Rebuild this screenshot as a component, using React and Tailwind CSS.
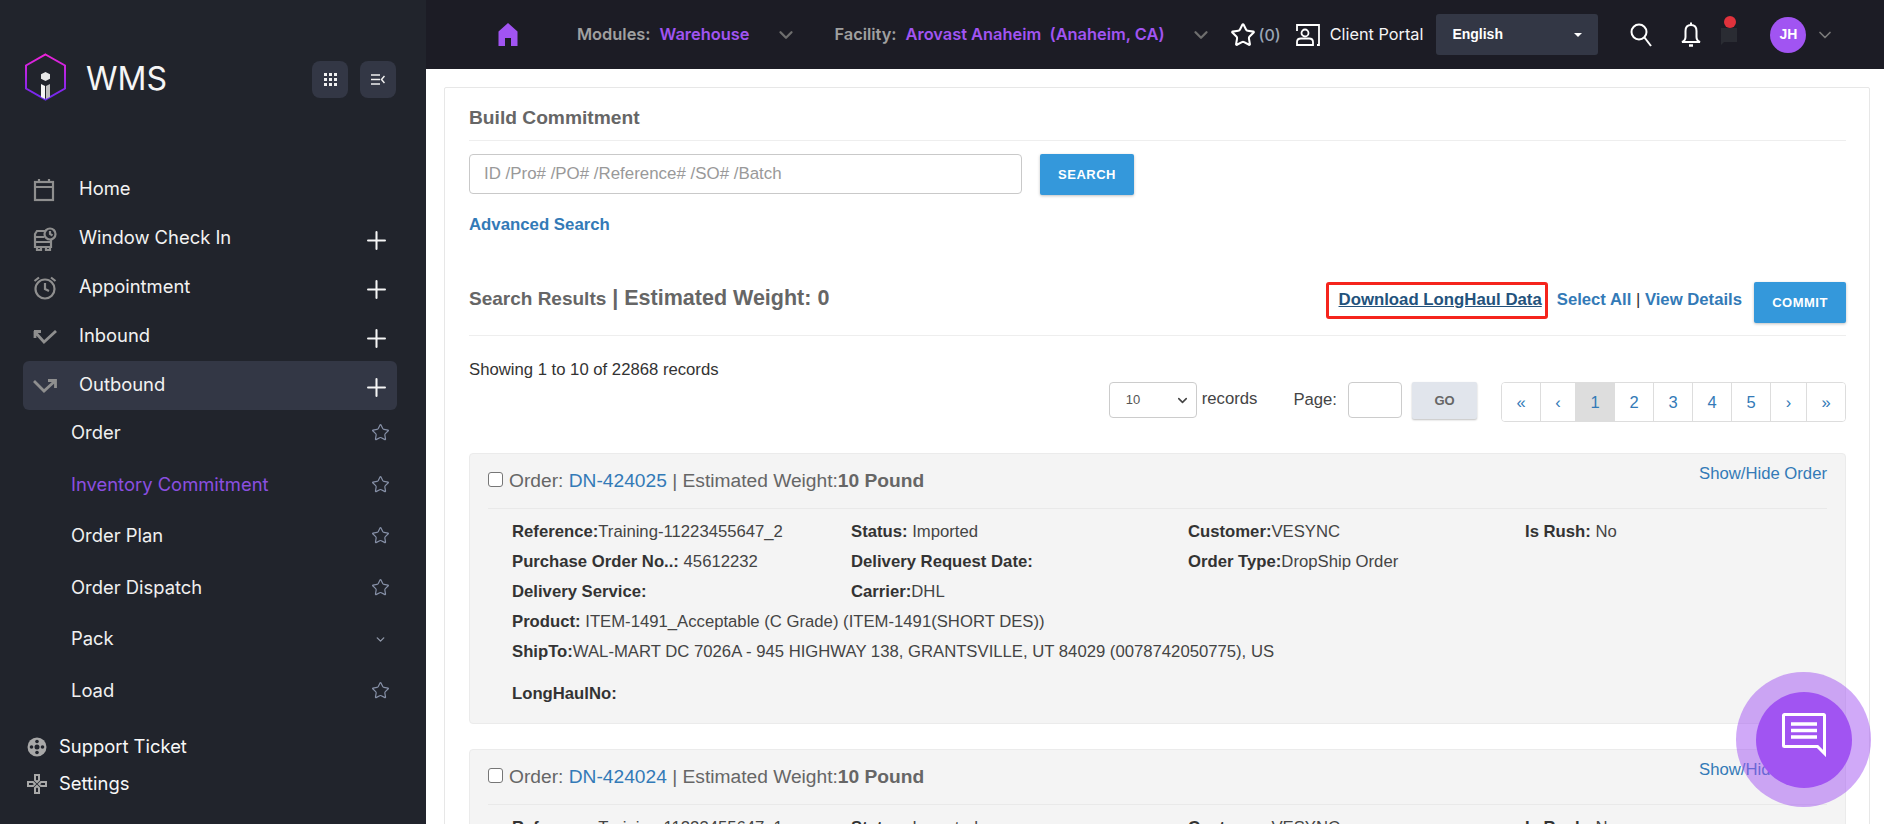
import React from "react";
import { Star, Plus, ChevronDown } from "lucide-react";

const arial = "font-['Liberation_Sans',Arial,sans-serif]";

const menu = [
  { label: "Home", icon: "home" },
  { label: "Window Check In", icon: "truck", plus: true },
  { label: "Appointment", icon: "alarm", plus: true },
  { label: "Inbound", icon: "in", plus: true },
  { label: "Outbound", icon: "out", plus: true, active: true },
];

const subMenu = [
  { label: "Order" },
  { label: "Inventory Commitment", active: true },
  { label: "Order Plan" },
  { label: "Order Dispatch" },
  { label: "Pack", chevron: true },
  { label: "Load" },
];

const pages = ["«", "‹", "1", "2", "3", "4", "5", "›", "»"];
const pageWidths = ["w-[39px]", "w-[35px]", "w-[39px]", "w-[39px]", "w-[39px]", "w-[39px]", "w-[39px]", "w-[36px]", "w-[38px]"];

function MenuIcon({ name }) {
  const c = { fill: "none", stroke: "#8f8f8f", strokeWidth: 2.2 };
  if (name === "home")
    return (
      <svg width="22" height="24" viewBox="0 0 22 24" {...c}>
        <rect x="2" y="4" width="18" height="18" />
        <path d="M2 9h18M6 1v4M16 1v4" />
      </svg>
    );
  if (name === "truck")
    return (
      <svg width="24" height="24" viewBox="0 0 24 24" {...c}>
        <path d="M12 4H4L2 7v13h16v-7M2 10h9M2 15h16M4 20v3h4v-3M13 20v3h4v-3" />
        <circle cx="17" cy="7" r="5.5" />
        <path d="M17 4v3l2.5 1.5" />
      </svg>
    );
  if (name === "alarm")
    return (
      <svg width="24" height="24" viewBox="0 0 24 24" {...c}>
        <circle cx="12" cy="13" r="9.5" />
        <path d="M12 7v6l4 2M1.5 5 6 1.5M22.5 5 18 1.5" />
      </svg>
    );
  if (name === "in")
    return (
      <svg width="24" height="14" viewBox="0 0 24 14" {...c} strokeWidth="2.8">
        <path d="M1 1.500h7M2 1v7M2 2l9 10L23 1" />
      </svg>
    );
  return (
    <svg width="24" height="14" viewBox="0 0 24 14" {...c} strokeWidth="2.8">
      <path d="M1 2l10 10L22 2M15 1.500h7.500V9" />
    </svg>
  );
}

function Logo() {
  return (
    <svg width="44" height="49" viewBox="0 0 44 49">
      <defs>
        <linearGradient id="hex" x1="0" y1="0" x2="0" y2="1">
          <stop offset="0" stopColor="#ee22d8" />
          <stop offset="1" stopColor="#6a28f0" />
        </linearGradient>
      </defs>
      <path d="M21.500 1.500 41 12.500v23L21.500 46.500 2 35.500v-23z" fill="none" stroke="url(#hex)" strokeWidth="2" />
      <path d="M21.500 19l4.500 2.200v4.600L21.500 28 17 25.800v-4.600z" fill="#e8e8e8" />
      <path d="M17 31l4 2v13l-4-2z" fill="#f5f5f5" />
      <path d="M26 31l-4 2v13l4-2z" fill="#bdbdbd" />
    </svg>
  );
}

function SideBar() {
  return (
    <aside className="w-[426px] h-full shrink-0 bg-[#21242c] text-white font-['Inter',sans-serif]">
      <div className="h-[165px] pt-[53px] pl-[24px] pr-[30px] flex items-start">
        <Logo />
        <span className="ml-[18px] mt-[3px] text-[32px] leading-[46px] text-[#f5f5f5]">WMS</span>
        <div className="ml-auto mt-[8px] flex gap-[12px]">
          <button className="w-[36px] h-[37px] rounded-[8px] bg-[#333745] flex items-center justify-center">
            <svg width="13" height="13" viewBox="0 0 13 13" fill="#f0f0f0">
              <path d="M0 0h3v3H0zM5 0h3v3H5zM10 0h3v3h-3zM0 5h3v3H0zM5 5h3v3H5zM10 5h3v3h-3zM0 10h3v3H0zM5 10h3v3H5zM10 10h3v3h-3z" />
            </svg>
          </button>
          <button className="w-[36px] h-[37px] rounded-[8px] bg-[#333745] flex items-center justify-center">
            <svg width="14" height="11" viewBox="0 0 14 11" fill="none" stroke="#f0f0f0" strokeWidth="1.500">
              <path d="M0 1h9M0 5.500h9M0 10h9M13.500 2 10.500 5.500l3 3.500" />
            </svg>
          </button>
        </div>
      </div>
      <nav className="pl-[23px] pr-[29px]">
        {menu.map((m) => (
          <div
            key={m.label}
            className={
              "h-[49px] flex items-center pl-[10px] pr-[6px] rounded-[6px] " + (m.active ? "bg-[#333745]" : "")
            }
          >
            <span className="w-[46px] flex justify-start"><MenuIcon name={m.icon} /></span>
            <span className="mb-[2px] text-[18.400px] text-[#f2f2f2]">{m.label}</span>
            {m.plus && <Plus size={29} strokeWidth={1.700} className="ml-auto mt-[4px]" color="#f5f5f5" />}
          </div>
        ))}
      </nav>
      <div className="mt-[-3px] pl-[71px] pr-[36px]">
        {subMenu.map((s) => (
          <div key={s.label} className="h-[51.600px] flex items-center justify-between">
            <span className={"text-[18.400px] " + (s.active ? "text-[#8b4fe0]" : "text-[#f0f0f0]")}>{s.label}</span>
            {s.chevron ? (
              <ChevronDown size={13} strokeWidth={2.500} color="#8f97a8" className="mr-[3px]" />
            ) : (
              <Star size={19} strokeWidth={1.500} color="#8791a8" />
            )}
          </div>
        ))}
      </div>
      <div className="mt-[12px] pl-[27px]">
        <div className="h-[37px] flex items-center gap-[12px]">
          <svg width="20" height="20" viewBox="0 0 20 20">
            <circle cx="10" cy="10" r="9.500" fill="#a8a8a8" />
            <circle cx="10" cy="10" r="2.500" fill="#21242c" />
            <circle cx="10" cy="4.500" r="1.800" fill="#21242c" />
            <circle cx="10" cy="15.500" r="1.800" fill="#21242c" />
            <circle cx="4.500" cy="10" r="1.800" fill="#21242c" />
            <circle cx="15.500" cy="10" r="1.800" fill="#21242c" />
          </svg>
          <span className="text-[18.400px] text-[#f8f8f8]">Support Ticket</span>
        </div>
        <div className="h-[37px] flex items-center gap-[12px]">
          <svg width="20" height="20" viewBox="0 0 20 20" fill="none" stroke="#a8a8a8" strokeWidth="2">
            <path d="M8 1h4v5l-2 2-2-2zM8 19h4v-5l-2-2-2 2zM1 8v4h5l2-2-2-2zM19 8v4h-5l-2-2 2-2z" />
          </svg>
          <span className="text-[18.400px] text-[#f8f8f8]">Settings</span>
        </div>
      </div>
    </aside>
  );
}

function TopBar() {
  return (
    <header className="h-[69px] shrink-0 bg-[#1c1c25] flex items-center pl-[72px] font-['Inter',sans-serif] text-[16.400px]">
      <svg width="20" height="23" viewBox="0 0 20 23" fill="#a154f2">
        <path d="M10 0l9.500 8.500V23H13v-8H7v8H.5V8.500z" />
      </svg>
      <span className="ml-[59px] font-semibold text-[#a0a0a0]">Modules:</span>
      <span className="ml-[9px] font-semibold text-[#a154f2]">Warehouse</span>
      <ChevronDown size={22} strokeWidth={2.500} color="#6e6e6e" className="ml-[26px]" />
      <span className="ml-[37px] font-semibold text-[#a0a0a0]">Facility:</span>
      <span className="ml-[9px] font-semibold text-[#a154f2] whitespace-pre">Arovast Anaheim  (Anaheim, CA)</span>
      <ChevronDown size={22} strokeWidth={2.500} color="#6e6e6e" className="ml-[25px]" />
      <Star size={26} strokeWidth={1.900} color="#fff" className="ml-[18px]" />
      <span className="ml-[3px] text-[#9aa5b5] text-[16px] font-medium">(0)</span>
      <svg width="25" height="22" viewBox="0 0 25 22" fill="none" stroke="#fff" strokeWidth="1.800" className="ml-[14px]">
        <path d="M2 7V1h22v20h-2" />
        <circle cx="10" cy="9" r="3.500" />
        <path d="M2 21v-3c0-2.500 2-3.500 4-3.500h8c2 0 4 1 4 3.500v3z" />
      </svg>
      <span className="ml-[10px] text-[#f5f5f5] text-[16.300px]">Client Portal</span>
      <div className="ml-[13px] w-[162px] h-[41px] rounded-[3px] bg-[#333745] flex items-center pl-[16px] pr-[16px] justify-between">
        <span className={arial + " font-bold text-[14px] text-white"}>English</span>
        <span className="w-0 h-0 border-x-[4px] border-x-transparent border-t-[4px] border-t-white" />
      </div>
      <svg width="24" height="24" viewBox="0 0 24 24" fill="none" stroke="#fff" strokeWidth="2" className="ml-[31px]">
        <circle cx="10" cy="9" r="7.500" />
        <path d="M15.500 14.500 22 23" />
      </svg>
      <svg width="22" height="26" viewBox="0 0 22 26" fill="none" stroke="#fff" strokeWidth="2" className="ml-[27px]">
        <path d="M11 3c-4 0-5.500 3-5.500 6v6c0 3-1 4-3.500 5h18c-2.500-1-3.500-2-3.500-5V9c0-3-1.500-6-5.500-6z" />
        <path d="M11 .5V3" />
        <path d="M9 23.500h4" strokeWidth="2.500" />
      </svg>
      <div className="relative ml-[18px]">
        <svg width="18" height="22" viewBox="0 0 18 22" fill="#2a2c33">
          <path d="M1 4h16v14H4l-3 3z" />
        </svg>
        <span className="absolute left-[4px] top-[-8px] w-[12px] h-[12px] rounded-full bg-[#e0323c]" />
      </div>
      <div className={arial + " ml-[32px] w-[36px] h-[36px] rounded-full bg-[#a154f2] flex items-center justify-center text-white font-bold text-[14px]"}>
        JH
      </div>
      <ChevronDown size={20} strokeWidth={2} color="#7a7a7a" className="ml-[9px]" />
    </header>
  );
}

function Field({ label, value, w }) {
  return (
    <div className={w}>
      <b className="text-[#333]">{label}</b>
      <span className="text-[#444]">{value}</span>
    </div>
  );
}

function OrderPanel({ id, reference }) {
  return (
    <div className="rounded-[4px] border border-[#ebebeb] bg-[#f4f4f4] pl-[18px] pr-[18px] h-[271px] shrink-0">
      <div className="h-[55px] border-b border-[#e9e9e9] flex items-start relative text-[#666]">
        <input type="checkbox" className="mt-[18px] w-[15px] h-[15px] appearance-none rounded-[3px] border border-[#767676] bg-white" />
        <span className="mt-[15px] ml-[6px] text-[19.200px] leading-[24px]">
          Order: <span className="text-[#337ab7]">{id}</span> | Estimated Weight:<b>10 Pound</b>
        </span>
        <span className="ml-auto mt-[10px] text-[16.700px] leading-[20px] text-[#337ab7]">Show/Hide Order</span>
      </div>
      <div className="pl-[24px] pt-[8px] text-[16.700px] leading-[30px]">
        <div className="flex">
          <Field w="w-[339px]" label="Reference:" value={reference} />
          <Field w="w-[337px]" label="Status:" value=" Imported" />
          <Field w="w-[337px]" label="Customer:" value="VESYNC" />
          <Field label="Is Rush:" value=" No" />
        </div>
        <div className="flex">
          <Field w="w-[339px]" label="Purchase Order No..:" value=" 45612232" />
          <Field w="w-[337px]" label="Delivery Request Date:" value="" />
          <Field label="Order Type:" value="DropShip Order" />
        </div>
        <div className="flex">
          <Field w="w-[339px]" label="Delivery Service:" value="" />
          <Field label="Carrier:" value="DHL" />
        </div>
        <Field label="Product:" value=" ITEM-1491_Acceptable (C Grade) (ITEM-1491(SHORT DES))" />
        <Field label="ShipTo:" value="WAL-MART DC 7026A - 945 HIGHWAY 138, GRANTSVILLE, UT 84029 (0078742050775), US" />
        <div className="mt-[12px]">
          <Field label="LongHaulNo:" value="" />
        </div>
      </div>
    </div>
  );
}

function Content() {
  return (
    <main className={arial + " flex-1 min-h-0 overflow-hidden bg-white pt-[18px] pl-[18px] pr-[14px]"}>
      <div className="h-[800px] border border-[#e7e7e7] rounded-[2px] bg-white pl-[24px] pr-[23px]">
        <div className="h-[53px] border-b border-[#eeeeee] flex items-center">
          <h1 className="pt-[9px] text-[19.200px] font-bold text-[#666]">Build Commitment</h1>
        </div>
        <div className="mt-[13px] flex items-start">
          <div className="w-[553px] h-[40px] rounded-[4px] border border-[#c9c9c9] bg-white pl-[14px] flex items-center text-[16.900px] text-[#999]">
            ID /Pro# /PO# /Reference# /SO# /Batch
          </div>
          <button className="ml-[18px] w-[94px] h-[41px] rounded-[2px] bg-[#3498db] text-white text-[13px] font-bold tracking-[0.5px] shadow-[0_1px_3px_rgba(0,0,0,0.25)]">
            SEARCH
          </button>
        </div>
        <div className="mt-[21px] text-[16.800px] leading-[18px] font-bold text-[#337ab7]">Advanced Search</div>

        <div className="mt-[29px] h-[73px] border-b border-[#eeeeee] flex items-start">
          <div className="mt-[19px] text-[#666] font-bold">
            <span className="text-[19px]">Search Results</span>
            <span className="text-[21.500px]"> | Estimated Weight: 0</span>
          </div>
          <div className="ml-auto mt-[19px] flex items-start">
            <span className="h-[37px] w-[222px] rounded-[3px] border-[3px] border-[#f5241c] flex items-center justify-end pr-[3px] pb-[2px] text-[16.800px] font-bold text-[#23527c] underline">
              Download LongHaul Data
            </span>
            <span className="ml-[9px] mt-[5px] text-[16.700px] text-[#337ab7] font-bold">
              Select All <span className="font-normal text-[#333]">|</span> View Details
            </span>
            <button className="ml-[12px] w-[92px] h-[41px] rounded-[2px] bg-[#3498db] text-white text-[13px] font-bold tracking-[0.5px] shadow-[0_1px_3px_rgba(0,0,0,0.25)]">
              COMMIT
            </button>
          </div>
        </div>

        <div className="mt-[25px] text-[16.700px] leading-[18px] text-[#333]">Showing 1 to 10 of 22868 records</div>

        <div className="mt-[3px] flex items-start">
          <div className="ml-auto w-[88px] h-[36px] rounded-[4px] border border-[#cccccc] bg-white flex items-center pl-[16px] pr-[6px] justify-between text-[13px] text-[#555]">
            10
            <ChevronDown size={15} strokeWidth={2.500} color="#444" />
          </div>
          <span className="ml-[5px] mt-[4px] text-[16.700px] text-[#444]">records</span>
          <span className="ml-[36px] mt-[5px] text-[16.700px] text-[#444]">Page:</span>
          <div className="ml-[11px] w-[54px] h-[36px] rounded-[4px] border border-[#cccccc] bg-white" />
          <button className="ml-[10px] w-[65px] h-[37px] rounded-[2px] bg-[#e1e5ec] text-[#666] text-[13px] font-bold shadow-[0_1px_2px_rgba(0,0,0,0.25)]">
            GO
          </button>
          <div className="ml-[24px] h-[40px] flex rounded-[4px] border border-[#dddddd] overflow-hidden">
            {pages.map((p, i) => (
              <span
                key={i}
                className={
                  pageWidths[i] +
                  " flex items-center justify-center text-[16.500px] border-[#dddddd] " +
                  (i < 8 ? "border-r " : "") +
                  (p === "1" ? "bg-[#dddddd] text-[#337ab7]" : "bg-white text-[#337ab7]")
                }
              >
                {p}
              </span>
            ))}
          </div>
        </div>

        <div className="mt-[31px] flex flex-col gap-[25px]">
          <OrderPanel id="DN-424025" reference="Training-11223455647_2" />
          <OrderPanel id="DN-424024" reference="Training-11223455647_1" />
        </div>
      </div>
    </main>
  );
}

function ChatWidget() {
  return (
    <div className="absolute left-[1736px] top-[672px] w-[135px] h-[135px] rounded-full bg-[#a154f2]/50 flex items-center justify-center">
      <div className="w-[96px] h-[96px] rounded-full bg-[#a154f2] flex items-center justify-center">
        <svg width="44" height="44" viewBox="0 0 44 44" fill="none" className="mb-[10px]">
          <path d="M2.500 1.500h39a1 1 0 0 1 1 1v38l-7-7H2.500a1 1 0 0 1-1-1v-30a1 1 0 0 1 1-1z" stroke="#fff" strokeWidth="3" />
          <path d="M9 11h26M9 17.500h26M9 24h26" stroke="#fff" strokeWidth="3.500" />
        </svg>
      </div>
    </div>
  );
}

export default function App() {
  return (
    <div className="relative w-[1884px] h-[824px] overflow-hidden flex bg-white">
      <SideBar />
      <div className="flex-1 min-w-0 flex flex-col">
        <TopBar />
        <Content />
      </div>
      <ChatWidget />
    </div>
  );
}
